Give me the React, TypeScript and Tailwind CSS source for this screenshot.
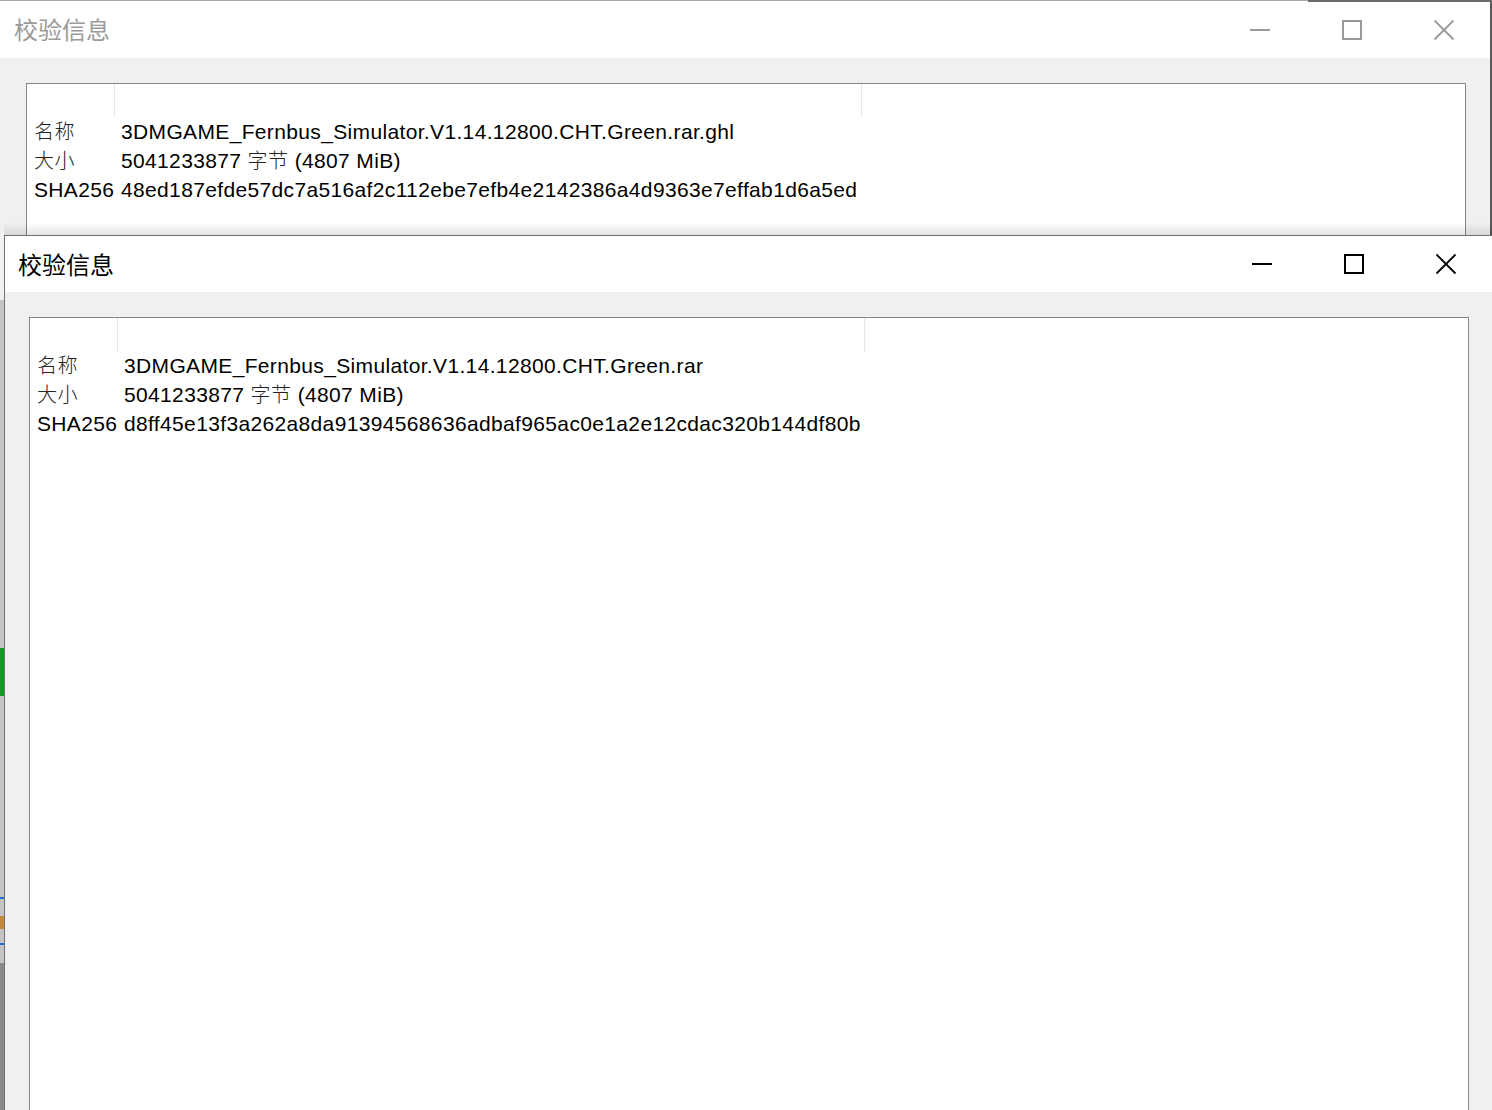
import React from "react";

const FONT = { fontFamily: '"Liberation Sans", Arial, "Noto Sans CJK SC", sans-serif' };
const TITLE_FONT = { fontFamily: '"Noto Sans CJK SC", "Liberation Sans", sans-serif' };

function MinIcon({ color }: { color: string }) {
  return (
    <svg width="22" height="22" viewBox="0 0 22 22">
      <line x1="1" y1="11" x2="21" y2="11" stroke={color} strokeWidth="2" />
    </svg>
  );
}
function MaxIcon({ color }: { color: string }) {
  return (
    <svg width="22" height="22" viewBox="0 0 22 22">
      <rect x="2" y="2" width="18" height="18" fill="none" stroke={color} strokeWidth="2" />
    </svg>
  );
}
function CloseIcon({ color }: { color: string }) {
  return (
    <svg width="22" height="22" viewBox="0 0 22 22">
      <line x1="1.5" y1="1.5" x2="20.5" y2="20.5" stroke={color} strokeWidth="1.8" />
      <line x1="20.5" y1="1.5" x2="1.5" y2="20.5" stroke={color} strokeWidth="1.8" />
    </svg>
  );
}

type Row = { label: React.ReactNode; value: React.ReactNode };

function Dialog({
  active,
  rows,
  titleH,
  padX,
  padTop,
}: {
  active: boolean;
  rows: Row[];
  titleH: number;
  padX: number;
  padTop: number;
}) {
  const iconColor = active ? "#000000" : "#999999";
  return (
    <div className="flex flex-col w-full h-full">
      <div className="flex items-center bg-white shrink-0" style={{ height: titleH }}>
        <div
          className={`flex-1 text-[24px] leading-none ${active ? "text-black pl-[13px] -mt-[1px]" : "text-[#9a9a9a] pl-[14px] -mt-[1px]"}`}
          style={TITLE_FONT}
        >
          校验信息
        </div>
        <div className="flex h-full">
          <div className="w-[92px] h-full flex items-center justify-center">
            <MinIcon color={iconColor} />
          </div>
          <div className="w-[92px] h-full flex items-center justify-center">
            <MaxIcon color={iconColor} />
          </div>
          <div className="w-[92px] h-full flex items-center justify-center">
            <CloseIcon color={iconColor} />
          </div>
        </div>
      </div>
      <div
        className="flex-1 bg-[#f0f0f0] flex flex-col"
        style={{ paddingLeft: padX, paddingTop: padTop }}
      >
        <div className="flex-1 w-[1440px] bg-white border border-[#828790] flex flex-col">
          <div className="flex h-[33px] shrink-0">
            <div className="w-[88px] border-r border-[#e5e5e5]" />
            <div className="w-[747px] border-r border-[#e5e5e5]" />
          </div>
          <div className="flex flex-col text-[21px] tracking-[0.35px] text-black" style={FONT}>
            {rows.map((r, i) => (
              <div key={i} className="flex h-[29px] items-center pt-[1px]">
                <div className="w-[94px] pl-[7px] whitespace-nowrap">{r.label}</div>
                <div className="whitespace-nowrap">{r.value}</div>
              </div>
            ))}
          </div>
        </div>
      </div>
    </div>
  );
}

const cjk = (s: string) => (
  <span
    className="text-[20px] text-[#222] tracking-[0.5px]"
    style={{ fontFamily: '"Noto Sans CJK SC", sans-serif', fontWeight: 300 }}
  >
    {s}
  </span>
);

export default function App() {
  return (
    <div className="relative w-[1492px] h-[1110px] overflow-hidden bg-[#c4c4c4]" style={FONT}>
      {/* desktop remnants on the left edge */}
      <div className="absolute left-0 top-[648px] w-[4px] h-[48px] bg-[#109c20]" />
      <div className="absolute left-0 top-[897px] w-[4px] h-[2px] bg-[#1e6fd0]" />
      <div className="absolute left-0 top-[916px] w-[4px] h-[13px] bg-[#c08a3a]" />
      <div className="absolute left-0 top-[943px] w-[4px] h-[2px] bg-[#1e6fd0]" />
      <div className="absolute left-0 top-[963px] w-[4px] h-[147px] bg-[#8a8a8a]" />
      <div className="absolute left-0 top-[276px] w-[4px] h-[1px] bg-[#888]" />
      <div className="absolute left-0 top-[295px] w-[4px] h-[1px] bg-[#888]" />

      {/* back (inactive) window */}
      <div className="absolute left-0 top-0 w-[1492px] h-[300px] border-t border-[#a8a8a8] border-r-2 border-r-[#5a5a5a]">
        <Dialog
          active={false}
          titleH={57}
          padX={26}
          padTop={25}
          rows={[
            { label: cjk("名称"), value: "3DMGAME_Fernbus_Simulator.V1.14.12800.CHT.Green.rar.ghl" },
            { label: cjk("大小"), value: <>5041233877 {cjk("字节")} (4807 MiB)</> },
            { label: "SHA256", value: "48ed187efde57dc7a516af2c112ebe7efb4e2142386a4d9363e7effab1d6a5ed" },
          ]}
        />
      </div>
      <div className="absolute left-[1308px] top-0 w-[184px] h-[2px] bg-[#6a6a6a]" />

      {/* shadow above front window */}
      <div className="absolute left-[4px] top-[222px] w-[1488px] h-[13px] bg-gradient-to-b from-transparent to-black/10" />

      {/* front (active) window */}
      <div className="absolute left-[4px] top-[235px] w-[1488px] h-[900px] border-t border-l border-[#707070]">
        <Dialog
          active={true}
          titleH={56}
          padX={24}
          padTop={25}
          rows={[
            { label: cjk("名称"), value: "3DMGAME_Fernbus_Simulator.V1.14.12800.CHT.Green.rar" },
            { label: cjk("大小"), value: <>5041233877 {cjk("字节")} (4807 MiB)</> },
            { label: "SHA256", value: "d8ff45e13f3a262a8da91394568636adbaf965ac0e1a2e12cdac320b144df80b" },
          ]}
        />
      </div>
    </div>
  );
}
